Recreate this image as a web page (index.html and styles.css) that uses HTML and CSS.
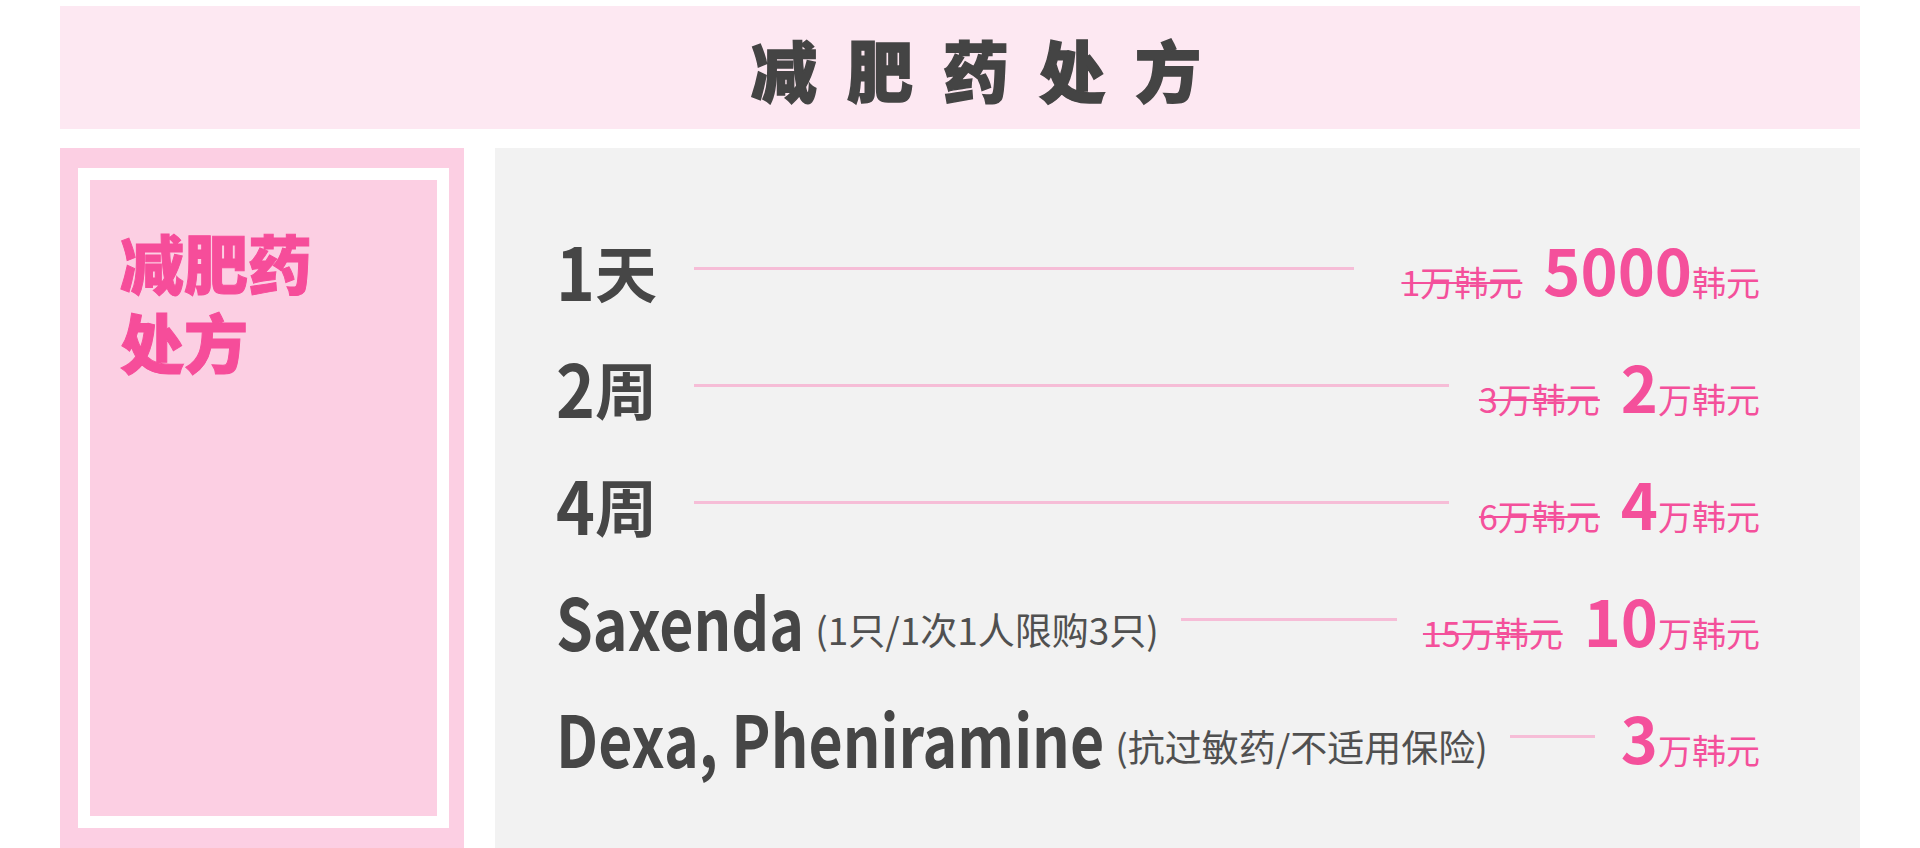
FILE: index.html
```html
<!DOCTYPE html>
<html lang="zh-CN">
<head>
<meta charset="utf-8">
<title>减肥药处方</title>
<link rel="stylesheet" href="styles.css">
</head>
<body>
<div class="page">
  <header class="banner">
    <h1 class="banner-title">减肥药处方</h1>
  </header>
  <main class="content">
    <aside class="side">
      <div class="side-frame">
        <h2 class="side-title"><span class="side-line">减肥药</span><span class="side-line">处方</span></h2>
      </div>
    </aside>
    <section class="prices">
      <div class="row">
        <div class="label"><span class="num">1</span><span class="cjk">天</span></div>
        <div class="rule rule-first"></div>
        <div class="price"><s class="old">1万韩元</s><span class="big">5000</span><span class="unit">韩元</span></div>
      </div>
      <div class="row">
        <div class="label"><span class="num">2</span><span class="cjk">周</span></div>
        <div class="rule"></div>
        <div class="price"><s class="old">3万韩元</s><span class="big">2</span><span class="unit">万韩元</span></div>
      </div>
      <div class="row">
        <div class="label"><span class="num">4</span><span class="cjk">周</span></div>
        <div class="rule"></div>
        <div class="price"><s class="old">6万韩元</s><span class="big">4</span><span class="unit">万韩元</span></div>
      </div>
      <div class="row">
        <div class="label"><span class="lat">Saxenda</span><span class="note">(1只/1次1人限购3只)</span></div>
        <div class="rule rule-note"></div>
        <div class="price"><s class="old">15万韩元</s><span class="big">10</span><span class="unit">万韩元</span></div>
      </div>
      <div class="row">
        <div class="label"><span class="lat">Dexa, Pheniramine</span><span class="note">(抗过敏药/不适用保险)</span></div>
        <div class="rule rule-note"></div>
        <div class="price"><span class="big">3</span><span class="unit">万韩元</span></div>
      </div>
    </section>
  </main>
</div>
</body>
</html>
```

FILE: styles.css
```css
body {
  margin: 0;
  background: #ffffff;
  font-family: "Noto Sans CJK SC", "Noto Sans", sans-serif;
}

.page {
  padding: 6px 60px 0;
}

.banner {
  height: 123px;
  background: #fde8f2;
  display: flex;
  align-items: center;
  justify-content: center;
}

.banner-title {
  margin: 0;
  padding-left: 62px;
  font-size: 66px;
  font-weight: 900;
  letter-spacing: 30px;
  line-height: 1;
  color: #444444;
  -webkit-text-stroke: 1.5px #444444;
}

.content {
  display: flex;
  gap: 31px;
  margin-top: 19px;
  height: 700px;
}

.side {
  flex: none;
  width: 404px;
  box-sizing: border-box;
  background: #fccfe3;
  padding: 20px 15px 20px 18px;
}

.side-frame {
  height: 100%;
  box-sizing: border-box;
  border: 12px solid #ffffff;
  padding: 42px 30px;
}

.side-title {
  margin: 0;
  display: flex;
  flex-direction: column;
  font-size: 64px;
  font-weight: 900;
  color: #f64d9a;
  -webkit-text-stroke: 1px #f64d9a;
}

.side-line {
  display: block;
  height: 79px;
  line-height: 79px;
}

.prices {
  flex: 1;
  min-width: 0;
  background: #f2f2f2;
  padding: 62px 100px 0 61px;
}

.row {
  display: flex;
  align-items: center;
  height: 117px;
}

.label {
  display: flex;
  align-items: baseline;
  color: #464646;
  font-weight: 700;
  line-height: 1;
  white-space: nowrap;
}

.num {
  display: inline-block;
  font-size: 66px;
  transform: scaleY(1.1);
}

.lat {
  display: inline-block;
  font-size: 59px;
  transform: scaleY(1.22);
}

.cjk {
  font-size: 62px;
}

.note {
  font-weight: 400;
  font-size: 37px;
  color: #505050;
  margin-left: 11px;
}

.rule {
  flex: 1;
  height: 3px;
  background: #f6bdd7;
  margin: 0 30px 0 37px;
}

.rule-first {
  margin-right: 47px;
}

.rule-note {
  margin-left: 22px;
  margin-right: 26px;
}

.price {
  display: flex;
  align-items: baseline;
  color: #f4509b;
  white-space: nowrap;
  line-height: 1;
}

.old {
  font-size: 34px;
  text-decoration: line-through;
  text-decoration-thickness: 2px;
  margin-right: 21px;
}

.big {
  font-size: 63px;
  font-weight: 700;
}

.unit {
  font-size: 34px;
}
```
